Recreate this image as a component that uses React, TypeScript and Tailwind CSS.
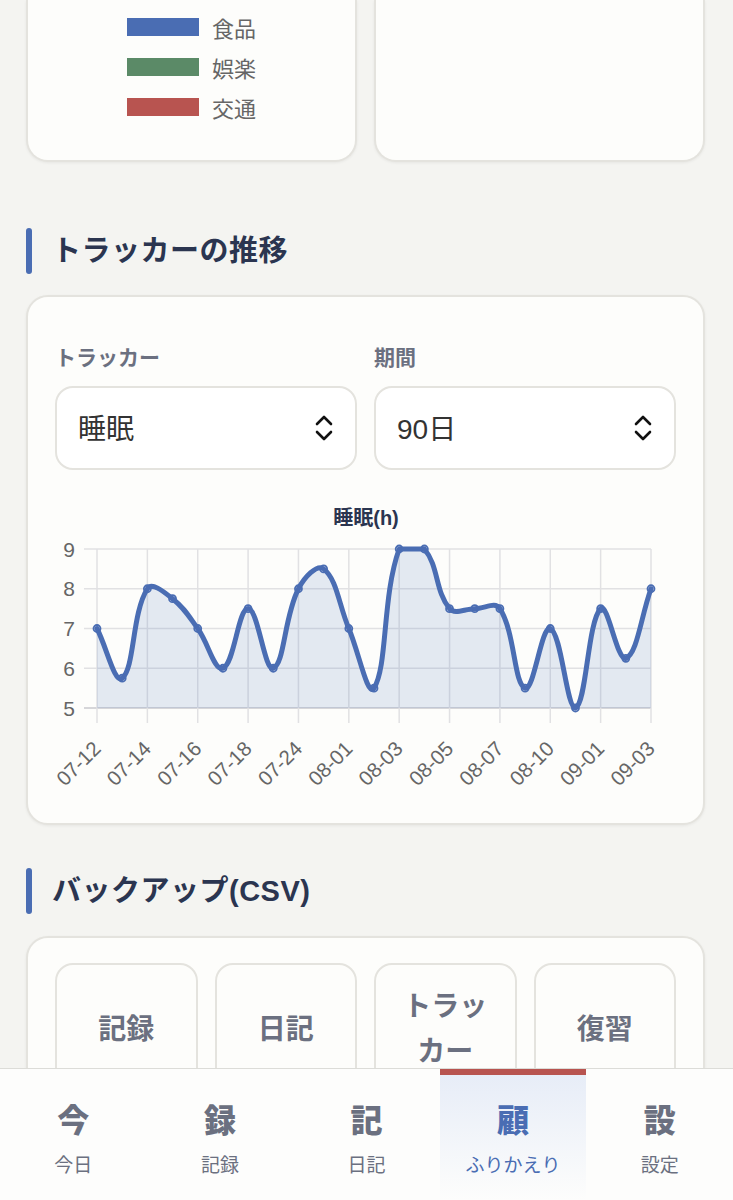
import React from "react";

const FONT = '"Liberation Sans", "Noto Sans CJK JP", sans-serif';

const data = [7, 5.75, 8, 7.75, 7, 6, 7.5, 6, 8, 8.5, 7, 5.5, 9, 9, 7.5, 7.5, 7.5, 5.5, 7, 5, 7.5, 6.25, 8];
const tickLabels = ["07-12", "07-14", "07-16", "07-18", "07-24", "08-01", "08-03", "08-05", "08-07", "08-10", "09-01", "09-03"];

const LEFT = 42;
const RIGHT = 596;
const TOP = 59;
const UNIT = 39.75;
const BOTTOM = TOP + 4 * UNIT;

type P = { x: number; y: number };

function buildPath(): { line: string; area: string; pts: P[] } {
  const step = (RIGHT - LEFT) / (data.length - 1);
  const pts: P[] = data.map((v, i) => ({ x: LEFT + i * step, y: TOP + (9 - v) * UNIT }));
  const t = 0.4;
  const ctrl = pts.map((cur, i) => {
    const prev = pts[i - 1] ?? cur;
    const next = pts[i + 1] ?? cur;
    const d01 = Math.hypot(cur.x - prev.x, cur.y - prev.y);
    const d12 = Math.hypot(next.x - cur.x, next.y - cur.y);
    let s01 = d01 / (d01 + d12);
    let s12 = d12 / (d01 + d12);
    if (isNaN(s01)) s01 = 0;
    if (isNaN(s12)) s12 = 0;
    const fa = t * s01;
    const fb = t * s12;
    const clamp = (p: P): P => ({
      x: Math.min(Math.max(p.x, LEFT), RIGHT),
      y: Math.min(Math.max(p.y, TOP), BOTTOM),
    });
    return {
      prev: clamp({ x: cur.x - fa * (next.x - prev.x), y: cur.y - fa * (next.y - prev.y) }),
      next: clamp({ x: cur.x + fb * (next.x - prev.x), y: cur.y + fb * (next.y - prev.y) }),
    };
  });
  let d = `M${pts[0].x},${pts[0].y}`;
  for (let i = 1; i < pts.length; i++) {
    const a = ctrl[i - 1].next;
    const b = ctrl[i].prev;
    d += ` C${a.x},${a.y} ${b.x},${b.y} ${pts[i].x},${pts[i].y}`;
  }
  const area = `${d} L${pts[pts.length - 1].x},${BOTTOM} L${pts[0].x},${BOTTOM} Z`;
  return { line: d, area, pts };
}

function Chart() {
  const { line, area, pts } = buildPath();
  const tickStep = (RIGHT - LEFT) / (tickLabels.length - 1);
  return (
    <svg width="622" height="310" viewBox="0 0 622 310" className="block overflow-visible">
      <text x="311" y="28" textAnchor="middle" dominantBaseline="central" fontSize="20" fontWeight="700" fill="#2b3550" style={{ fontFamily: FONT }}>
        睡眠(h)
      </text>
      {[9, 8, 7, 6, 5].map((v) => {
        const y = TOP + (9 - v) * UNIT;
        return (
          <g key={v}>
            <line x1={29} x2={RIGHT} y1={y} y2={y} stroke={v === 5 ? "#c9c9ce" : "#e1e1e3"} strokeWidth="1.5" />
            <text x="20" y={y} textAnchor="end" dominantBaseline="central" fontSize="21" fill="#666" style={{ fontFamily: FONT }}>
              {v}
            </text>
          </g>
        );
      })}
      {tickLabels.map((l, i) => {
        const x = LEFT + i * tickStep;
        return (
          <g key={l}>
            <line x1={x} x2={x} y1={TOP} y2={BOTTOM + 15} stroke="#e1e1e3" strokeWidth="1.5" />
            <text
              x={0}
              y={0}
              transform={`translate(${x + 5},${260}) rotate(-45)`}
              textAnchor="end"
              fontSize="20.5"
              fill="#666"
              style={{ fontFamily: FONT }}
            >
              {l}
            </text>
          </g>
        );
      })}
      <path d={area} fill="rgba(74,111,181,0.14)" />
      <path d={line} fill="none" stroke="#4a6db3" strokeWidth="5" strokeLinejoin="round" strokeLinecap="round" />
      {pts.map((p, i) => (
        <circle key={i} cx={p.x} cy={p.y} r="3.5" fill="rgba(74,109,179,0.15)" stroke="#4a6db3" strokeWidth="1.8" />
      ))}
    </svg>
  );
}

function Chevrons() {
  return (
    <svg width="18" height="26" viewBox="0 0 18 26" fill="none" stroke="#111" strokeWidth="2.6" strokeLinecap="round" strokeLinejoin="round">
      <path d="M2 9 L9 2 L16 9" />
      <path d="M2 17 L9 24 L16 17" />
    </svg>
  );
}

function SectionHeading({ children }: { children: React.ReactNode }) {
  return (
    <div className="flex items-center">
      <div className="w-[6px] h-[46px] rounded-[3px] bg-[#4a6db3]" />
      <div className="ml-[20px] text-[29px] font-bold leading-none text-[#2b3550] tracking-[0.5px]">{children}</div>
    </div>
  );
}

function Card({ className = "", children }: { className?: string; children?: React.ReactNode }) {
  return (
    <div className={`bg-[#fdfdfb] border-2 border-[#e4e3de] rounded-[22px] shadow-[0_1px_3px_rgba(0,0,0,0.06)] ${className}`}>
      {children}
    </div>
  );
}

const legend = [
  { label: "食品", color: "#4a6db3" },
  { label: "娯楽", color: "#5b8a67" },
  { label: "交通", color: "#b85450" },
];

const navItems = [
  { icon: "今", label: "今日" },
  { icon: "録", label: "記録" },
  { icon: "記", label: "日記" },
  { icon: "顧", label: "ふりかえり", active: true },
  { icon: "設", label: "設定" },
];

export default function App() {
  return (
    <div className="min-h-[1200px] bg-[#f4f4f1] relative overflow-hidden" style={{ fontFamily: FONT }}>
      <div className="pl-[26px] pr-[28px] pb-[200px]">
        <div className="grid grid-cols-2 gap-[17px]">
          <div className="h-[162px] bg-[#fdfdfb] border-2 border-t-0 border-[#e4e3de] rounded-b-[22px] shadow-[0_1px_3px_rgba(0,0,0,0.06)] flex justify-center pt-[18px]">
            <div className="flex flex-col gap-[22px]">
              {legend.map((l) => (
                <div key={l.label} className="flex items-center h-[18px]">
                  <div className="w-[72px] h-[18px]" style={{ backgroundColor: l.color }} />
                  <span className="ml-[13px] text-[22px] leading-none text-[#666]" style={{ fontFamily: '"Noto Sans CJK JP", sans-serif' }}>
                    {l.label}
                  </span>
                </div>
              ))}
            </div>
          </div>
          <div className="h-[162px] bg-[#fdfdfb] border-2 border-t-0 border-[#e4e3de] rounded-b-[22px] shadow-[0_1px_3px_rgba(0,0,0,0.06)]" />
        </div>

        <div className="mt-[66px]">
          <SectionHeading>トラッカーの推移</SectionHeading>
        </div>

        <Card className="mt-[21px] px-[27px] pt-[46px] pb-[23px]">
          <div className="grid grid-cols-2 gap-x-[17px]">
            {[
              { label: "トラッカー", value: "睡眠" },
              { label: "期間", value: "90日" },
            ].map((s) => (
              <div key={s.label} className="flex flex-col">
                <div className="text-[21px] leading-[30px] font-semibold text-[#6b7080]">{s.label}</div>
                <div className="mt-[13px] h-[84px] bg-white border-2 border-[#e4e3de] rounded-[18px] flex items-center justify-between pl-[21px] pr-[22px]">
                  <span className="text-[28px] leading-none text-[#333] pt-[4px]">{s.value}</span>
                  <Chevrons />
                </div>
              </div>
            ))}
          </div>
          <div className="mt-[20px]">
            <Chart />
          </div>
        </Card>

        <div className="mt-[43px]">
          <SectionHeading>バックアップ(CSV)</SectionHeading>
        </div>

        <Card className="mt-[22px] px-[27px] pt-[25px] pb-[27px]">
          <div className="grid grid-cols-4 gap-x-[17px]">
            {["記録", "日記", "トラッカー", "復習"].map((b) => (
              <div
                key={b}
                className="h-[132px] bg-[#fdfdfb] border-2 border-[#e4e3de] rounded-[18px] flex items-center justify-center px-[16px] text-center text-[28px] leading-[45px] font-semibold text-[#6b7080]"
              >
                {b}
              </div>
            ))}
          </div>
        </Card>
      </div>

      <nav className="fixed bottom-0 left-0 right-0 h-[132px] bg-[#fdfdfc] border-t border-[#dcdcd8] flex" style={{ fontFamily: '"Noto Sans CJK JP", sans-serif' }}>
        {navItems.map((n) => (
          <div
            key={n.label}
            className={`relative flex-1 flex flex-col items-center pt-[29px] ${n.active ? "bg-gradient-to-b from-[#e6ecf7] to-[#fdfdfc]" : ""}`}
          >
            {n.active && <div className="absolute top-0 left-0 right-0 h-[6px] bg-[#b85450]" />}
            <div className={`text-[32px] leading-[40px] font-black ${n.active ? "text-[#4a6db3]" : "text-[#6b7080]"}`}>{n.icon}</div>
            <div className={`mt-[12px] text-[19px] leading-[28px] ${n.active ? "text-[#4a6db3]" : "text-[#6b7080]"}`}>{n.label}</div>
          </div>
        ))}
      </nav>
    </div>
  );
}
